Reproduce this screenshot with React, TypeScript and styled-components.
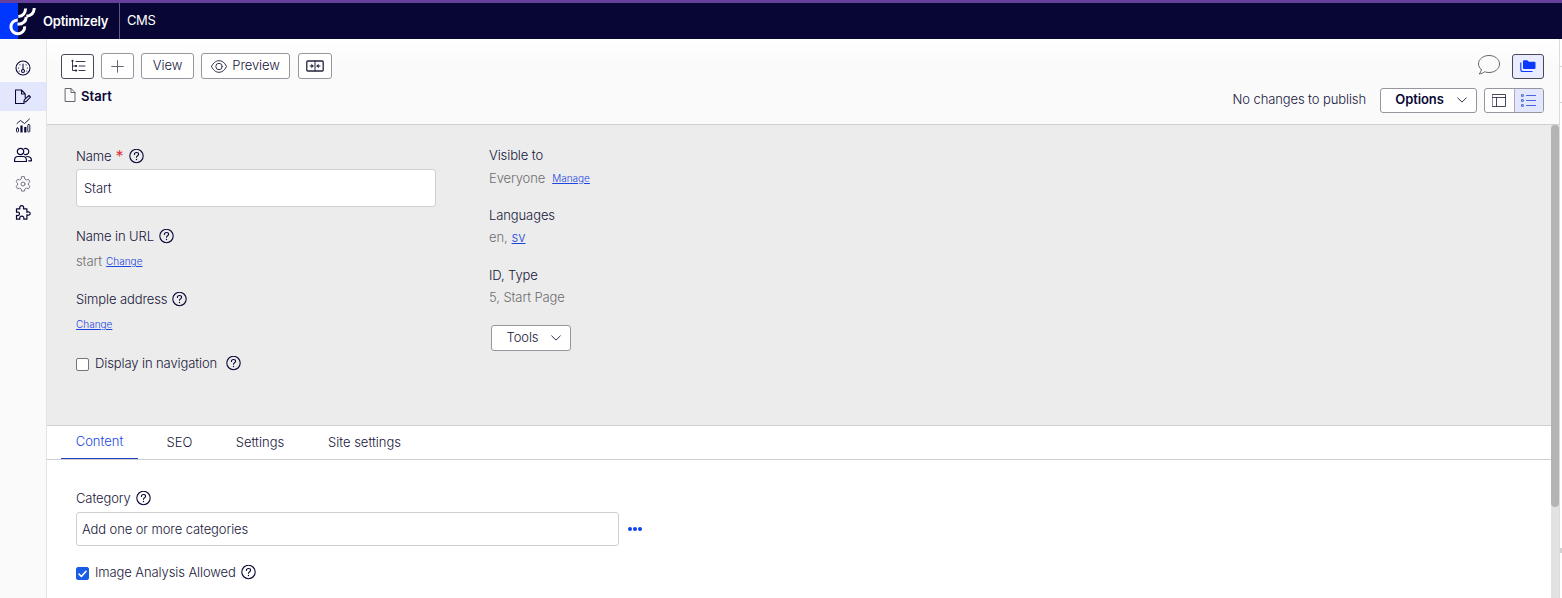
import React from "react";
import styled, { createGlobalStyle, css } from "styled-components";

const ink = "#080736";
const blue = "#1b46e0";

const GlobalStyle = createGlobalStyle`
  * { box-sizing: border-box; }
  body { margin: 0; background: #fff; }
  body, button, input { font-family: Inter, "Liberation Sans", sans-serif; font-size: 13px; font-weight: 300; letter-spacing: -0.1px; color: #17163a; }
  svg { display: block; flex: none; }
`;

const Page = styled.div`
  display: flex;
  flex-direction: column;
  width: 1562px;
  height: 598px;
  overflow: hidden;
`;

const TopBar = styled.header`
  display: flex;
  height: 39px;
  flex: none;
  border-top: 3px solid #65419d;
  background: #070634;
  color: #fff;
`;

const LogoBox = styled.div`
  width: 43px;
  background: linear-gradient(90deg, #0037ff 18px, #070634 18px);
`;

const Brand = styled.div`
  width: 77px;
  border-right: 1px solid #5d5c7c;
  line-height: 36px;
  font-weight: 600;
  letter-spacing: -0.2px;
`;

const Product = styled.div`
  padding-left: 7px;
  line-height: 35px;
  font-weight: 400;
  letter-spacing: -0.4px;
`;

const Body = styled.div`
  display: flex;
  flex: 1;
  min-height: 0;
`;

const SideNav = styled.nav`
  width: 47px;
  flex: none;
  padding-top: 14px;
  border-right: 1px solid #e3e3ea;
  background: #fafafa;
`;

const NavItem = styled.a<{ $active?: boolean }>`
  display: flex;
  align-items: center;
  justify-content: center;
  height: 29px;
  color: ${ink};
  background: ${(p) => (p.$active ? "#e3e7fe" : "transparent")};
`;

const Main = styled.main`
  display: flex;
  flex-direction: column;
  width: 1512px;
  flex: none;
`;

const Toolbar = styled.div`
  display: flex;
  justify-content: space-between;
  height: 86px;
  flex: none;
  padding: 14px 15px 0 14px;
  border-bottom: 1px solid #cfcfd3;
  background: linear-gradient(#fff, #fafafa 30px);
`;

const ToolbarSide = styled.div<{ $end?: boolean }>`
  display: flex;
  flex-direction: column;
  align-items: ${(p) => (p.$end ? "flex-end" : "flex-start")};
  gap: 8px;
`;

const ButtonRow = styled.div<{ $gap: number }>`
  display: flex;
  align-items: center;
  gap: ${(p) => p.$gap}px;
  height: 26px;
`;

const Button = styled.button<{ $w: number; $strong?: boolean; $tint?: boolean; $bold?: boolean }>`
  display: flex;
  align-items: center;
  justify-content: center;
  gap: 5px;
  width: ${(p) => p.$w}px;
  height: ${(p) => (p.$strong || p.$bold ? 25 : 26)}px;
  padding: 0;
  border: 1px solid ${(p) => (p.$strong ? "#484858" : "#96969e")};
  border-radius: 3px;
  background: ${(p) => (p.$tint ? "#e9ecff" : "#fff")};
  line-height: 18px;
  ${(p) => p.$bold && css`font-weight: 600; color: ${ink};`}
`;

const Caption = styled.span<{ $before?: number; $after?: number }>`
  height: 20px;
  margin: 0 ${(p) => p.$after ?? 0}px 0 ${(p) => p.$before ?? 0}px;
`;

const PageTitle = styled.h1`
  display: flex;
  align-items: center;
  gap: 5px;
  height: 18px;
  margin: 0 0 0 3px;
  font-size: 13px;
  font-weight: 600;
  letter-spacing: 0.05px;
  color: ${ink};
`;

const Status = styled.span`
  height: 19px;
  margin-right: 7px;
`;

const Segmented = styled.div`
  display: flex;
  width: 60px;
  height: 25px;
  border: 1px solid #96969e;
  border-radius: 3px;
  overflow: hidden;
  background: #fff;
`;

const Segment = styled.div<{ $active?: boolean }>`
  display: flex;
  flex: 1;
  align-items: center;
  justify-content: center;
  ${(p) => p.$active && css`border-left: 1px solid #a9acc0; background: #e3e7fe;`}
`;

const ScrollArea = styled.div`
  display: flex;
  flex: 1;
  min-height: 0;
`;

const Content = styled.div`
  width: 1504px;
  flex: none;
`;

const ScrollTrack = styled.div`
  width: 8px;
  background: #e2e2e2;
`;

const ScrollThumb = styled.div`
  height: 382px;
  border-radius: 4px;
  background: #b4b4b4;
`;

const Header = styled.section`
  display: flex;
  height: 301px;
  padding: 21px 0 0 29px;
  border-bottom: 1px solid #cfcfcf;
  background: #ececec;
`;

const Column = styled.div<{ $w: number; $lift?: number }>`
  width: ${(p) => p.$w}px;
  margin-top: ${(p) => -(p.$lift ?? 0)}px;
`;

const Line = styled.div<{ $after?: number; $gap?: number; $muted?: boolean }>`
  display: flex;
  align-items: center;
  height: 20px;
  gap: ${(p) => p.$gap ?? 5}px;
  margin-bottom: ${(p) => p.$after ?? 0}px;
  white-space: nowrap;
  color: ${(p) => (p.$muted ? "#6d6d70" : "inherit")};
`;

const Link = styled.a<{ $large?: boolean }>`
  font-size: ${(p) => (p.$large ? 13 : 10)}px;
  letter-spacing: 0;
  color: ${blue};
  text-decoration: underline;
`;

const Required = styled.span`
  height: 21px;
  margin: 0 1px 0 -1px;
  font-size: 16px;
  font-weight: 400;
  color: #dc3545;
`;

const Field = styled.input<{ $w: number; $h: number; $pad: number; $after: number }>`
  display: block;
  width: ${(p) => p.$w}px;
  height: ${(p) => p.$h}px;
  margin: 0 0 ${(p) => p.$after}px;
  padding: 0 ${(p) => p.$pad}px 1px;
  border: 1px solid #cfcfd2;
  border-radius: 3px;
  background: #fff;
`;

const Check = styled.span<{ $on?: boolean }>`
  display: flex;
  align-items: center;
  justify-content: center;
  width: 13px;
  height: 13px;
  margin: 3px 1px 0 0;
  border: 1px solid ${(p) => (p.$on ? "#1a5ce5" : "#74747a")};
  border-radius: 2px;
  background: ${(p) => (p.$on ? "#1a5ce5" : "#fff")};
`;

const HelpOffset = styled.span`
  margin-left: 4px;
`;

const ToolsSlot = styled.div`
  padding: 18px 0 0 2px;
`;

const Tabs = styled.div`
  display: flex;
  height: 34px;
  padding-left: 14px;
  border-bottom: 1px solid #cfcfcf;
`;

const Tab = styled.a<{ $w: number; $active?: boolean }>`
  width: ${(p) => p.$w}px;
  height: ${(p) => (p.$active ? 33 : 34)}px;
  text-align: center;
  letter-spacing: 0;
  line-height: ${(p) => (p.$active ? 31 : 33)}px;
  ${(p) => p.$active && css`color: ${blue}; border-bottom: 1px solid #1c3fc4;`}
`;

const Form = styled.section`
  padding: 28px 0 0 29px;
`;

const FieldRow = styled.div`
  display: flex;
  gap: 9px;
`;

const Dots = styled.div`
  display: flex;
  gap: 1px;
  padding-top: 15px;
`;

const Dot = styled.i`
  width: 4px;
  height: 4px;
  border-radius: 50%;
  background: #0d43ee;
`;

const Edge = styled.aside`
  flex: 1;
  padding-top: 27px;
  border-left: 1px solid #dcdcde;
`;

const EdgeMark = styled.div<{ $h: number; $after: number }>`
  height: ${(p) => p.$h}px;
  margin-bottom: ${(p) => p.$after}px;
  background: #d2d2d4;
`;

type SvgProps = { w: number; h: number; children: React.ReactNode; stroke?: number; color?: string };
const Icon = ({ w, h, children, stroke = 1.1, color = "currentColor" }: SvgProps) => (
  <svg width={w} height={h} viewBox={`0 0 ${w} ${h}`} fill="none" stroke={color} strokeWidth={stroke} strokeLinecap="round" strokeLinejoin="round">
    {children}
  </svg>
);

const Help = () => (
  <Icon w={15} h={15} color={ink} stroke={1.1}>
    <circle cx="7.5" cy="7" r="6.7" />
    <path d="M5.4 5.500c0-1.2.9-2 2.1-2s2.1.8 2.1 1.800c0 1.400-2.1 1.500-2.1 3" />
    <path d="M7.5 10.300v.2" strokeWidth="1.3" />
  </Icon>
);

const Chevron = () => (
  <Icon w={10} h={7} stroke={1} color="#33334a"><path d="M.7.9 5 5.1 9.3.9" /></Icon>
);

const Logo = () => (
  <Icon w={43} h={36} stroke={3} color="#fff">
    <g strokeLinecap="butt">
      <path d="M17.800 16.900a6.900 6.900 0 1 0 6.900 6.500" />
      <path d="M17.500 21.300C23 21 26 18.300 26.300 13.800" />
      <path d="M18.300 13.500C23 13.300 25.400 10.300 25.600 5.500" />
      <path d="M26.300 13.200C31.300 12.800 34 9.800 34.300 5" />
    </g>
  </Icon>
);

const App = () => (
  <>
    <GlobalStyle />
    <Page>
      <TopBar>
        <LogoBox><Logo /></LogoBox>
        <Brand>Optimizely</Brand>
        <Product>CMS</Product>
      </TopBar>
      <Body>
        <SideNav>
          <NavItem>
            <Icon w={16} h={16}>
              <circle cx="8" cy="8" r="7" />
              <circle cx="8" cy="11" r="1.500" />
              <path d="M8 4v5.500M3.500 8h.2M12.300 8h.2M4.900 4.800l.1.100M11 4.800l.100.100M4.300 11h.1M11.700 11h.1" />
            </Icon>
          </NavItem>
          <NavItem $active>
            <Icon w={16} h={16}>
              <path d="M9.200 14.500H.5V1h6l3.700 3.800v3.700M6.500 1v4h3.700" />
              <path d="m8.700 13.300.7-2.600 4.600-4.200 1.500 1.600-4.500 4.500-2.300.7Z" />
            </Icon>
          </NavItem>
          <NavItem>
            <Icon w={16} h={16} stroke={0.9}>
              <path d="m2 5.500 3.500-3 4 3L14.500 1" />
              <rect x="1.500" y="10" width="2" height="4" rx=".8" />
              <path d="M6.500 7.500V14.500M10.300 9v5.500" strokeWidth="2.200" strokeLinecap="butt" />
              <rect x="12.800" y="6.500" width="2" height="7.500" rx=".8" />
            </Icon>
          </NavItem>
          <NavItem>
            <Icon w={18} h={16} stroke={1.200}>
              <circle cx="6.500" cy="4.500" r="3.200" />
              <path d="M.6 14.500v-1.500c0-2.200 1.500-3.500 3.400-3.500h5c1.900 0 3.400 1.300 3.400 3.500v1.500ZM10.300 1.700c2-.8 4.500.6 4.500 2.800s-2 3.500-4.200 2.900M12.700 9.500c2.500 0 4.700 1.200 4.700 3.500v.8h-2.700" />
            </Icon>
          </NavItem>
          <NavItem>
            <Icon w={16} h={16} stroke={1} color="#77778b">
              <path d="m6.600 1-.4 2-1.700 1-2-.7-1.400 2.500 1.500 1.300v2L1.100 10.300l1.400 2.500 2-.7 1.700 1 .4 2h2.800l.4-2 1.700-1 2 .7 1.400-2.500-1.500-1.200v-2l1.500-1.300-1.400-2.500-2 .7-1.700-1-.4-2Z" />
              <circle cx="8" cy="8" r="2" />
            </Icon>
          </NavItem>
          <NavItem>
            <Icon w={16} h={16} stroke={1.200}>
              <path d="M1.500 3.800h3.400C4.200 2 5.200.7 6.700.7S9.200 2 8.500 3.800h3.400v3.500c1.600-.9 3.300-.3 3.300 1.200s-1.700 2.200-3.300 1.300v4.400H8.700c.7-1.900-.4-3-1.900-3s-2.600 1.100-1.900 3H1.500v-3.900c1.900.7 3-.1 3-1.500s-1.100-2.200-3-1.500Z" />
            </Icon>
          </NavItem>
        </SideNav>
        <Main>
          <Toolbar>
            <ToolbarSide>
              <ButtonRow $gap={7}>
                <Button $w={33} $strong aria-label="Navigation tree">
                  <Icon w={16} h={14} stroke={0.9} color="#24243e">
                    <path d="M2.500 2.500v9h2.500M2.500 7h2.500M6 2.500h9M9 7h6M9 11.500h6" />
                    <path d="M2.500 1.800v.2M5.800 7h.4M5.800 11.500h.4" strokeWidth="2" />
                  </Icon>
                </Button>
                <Button $w={33} aria-label="Add">
                  <Icon w={13} h={13} stroke={1} color="#666674"><path d="M6.500.7v11.600M.7 6.500h11.600" /></Icon>
                </Button>
                <Button $w={53}><Caption>View</Caption></Button>
                <Button $w={89}>
                  <Icon w={16} h={13} stroke={1} color="#33334a">
                    <path d="M.5 6.500C2.200 2.600 5 .700 8 .700s5.800 1.900 7.500 5.800C13.800 10.400 11 12.300 8 12.300S2.200 10.400.5 6.500Z" />
                    <circle cx="8" cy="6.500" r="3.200" />
                  </Icon>
                  <Caption>Preview</Caption>
                </Button>
                <CompareSlot>
                  <Button $w={34} aria-label="Compare">
                    <Icon w={18} h={12} stroke={1.300} color="#24243e">
                      <rect x=".8" y="1" width="16.400" height="10" rx="1" />
                      <path d="M9 1v10" strokeWidth="1" />
                      <path d="M4 6h3M11 6h3" strokeWidth="1" />
                      <path d="M5.800 4.600 7.300 6 5.800 7.400ZM12.200 4.600 10.700 6l1.500 1.400Z" strokeWidth=".6" fill="#24243e" />
                    </Icon>
                  </Button>
                </CompareSlot>
              </ButtonRow>
              <PageTitle>
                <Icon w={12} h={16} stroke={1} color="#666670"><path d="M1.500.500h5.500l4 4v9H1.500ZM7 .500v4h4" /></Icon>
                Start
              </PageTitle>
            </ToolbarSide>
            <ToolbarSide $end>
              <ButtonRow $gap={11}>
                <Icon w={24} h={24} stroke={1} color="#666672">
                  <path d="M4.300 15.500C2.500 14 1.500 12 1.500 10c0-4.900 4.700-8.500 10.500-8.500S22.500 5.100 22.500 10s-4.700 8.500-10.500 8.500c-1.600 0-3-.2-4.300-.7-1.700 1.200-3.700 2-5.700 2.200 1.400-1.200 2.200-2.700 2.300-4.500Z" />
                </Icon>
                <Button $w={32} $strong $tint aria-label="Assets">
                  <svg width="16" height="14" viewBox="0 0 16 14">
                    <path d="M3 2.200q0-1 1-1h3.200l1.700 1.500H14.500q1 0 1 1V9q0 1-1 1H4q-1 0-1-1Z" fill="#0d38ff" />
                    <path d="M.8 3.500V10.500q0 2 2 2H12.500" fill="none" stroke="#0d38ff" strokeWidth="1.100" />
                  </svg>
                </Button>
              </ButtonRow>
              <ButtonRow $gap={7}>
                <Status>No changes to publish</Status>
                <Button $w={97} $bold>
                  <Caption $before={5} $after={8}>Options</Caption><Chevron />
                </Button>
                <Segmented>
                  <Segment>
                    <Icon w={14} h={13} stroke={0.9} color="#33334a"><path d="M.5.500h13v12H.5ZM.5 3.500h13M4.500 3.500v9" /></Icon>
                  </Segment>
                  <Segment $active>
                    <Icon w={15} h={13} stroke={0.9} color="#3455d8">
                      <path d="M5.500 1.500h9M5.500 6.500h9M5.500 11.500h9" />
                      <path d="M.7.700h1.600v1.600H.7ZM.7 5.700h1.600v1.600H.7ZM.7 10.700h1.600v1.600H.7Z" />
                    </Icon>
                  </Segment>
                </Segmented>
              </ButtonRow>
            </ToolbarSide>
          </Toolbar>
          <ScrollArea>
            <Content>
              <Header>
                <Column $w={413}>
                  <Line $after={3}>Name <Required>*</Required><Help /></Line>
                  <Field $w={360} $h={38} $pad={7} $after={19} defaultValue="Start" />
                  <Line $after={5}>Name in URL <Help /></Line>
                  <Line $after={18} $gap={4} $muted>start <Link>Change</Link></Line>
                  <Line $after={5}>Simple address <Help /></Line>
                  <Line $after={19}><Link>Change</Link></Line>
                  <Line><Check />Display in navigation <HelpOffset><Help /></HelpOffset></Line>
                </Column>
                <Column $w={300} $lift={1}>
                  <Line $after={3}>Visible to</Line>
                  <Line $after={17} $gap={7} $muted>Everyone <Link>Manage</Link></Line>
                  <Line $after={2}>Languages</Line>
                  <Line $after={18} $gap={4} $muted>en, <Link $large>sv</Link></Line>
                  <Line $after={2}>ID, Type</Line>
                  <Line $muted>5, Start Page</Line>
                  <ToolsSlot>
                    <Button $w={80}><Caption $before={6} $after={8}>Tools</Caption><Chevron /></Button>
                  </ToolsSlot>
                </Column>
              </Header>
              <Tabs>
                <Tab $w={77} $active>Content</Tab>
                <Tab $w={83}>SEO</Tab>
                <Tab $w={78}>Settings</Tab>
                <Tab $w={131}>Site settings</Tab>
              </Tabs>
              <Form>
                <Line $after={4}>Category <Help /></Line>
                <FieldRow>
                  <Field $w={543} $h={34} $pad={5} $after={16} defaultValue="Add one or more categories" />
                  <Dots><Dot /><Dot /><Dot /></Dots>
                </FieldRow>
                <Line>
                  <Check $on><Icon w={9} h={8} stroke={1.600} color="#fff"><path d="m1 4 2.400 2.500L8 1.300" /></Icon></Check>
                  Image Analysis Allowed <Help />
                </Line>
              </Form>
            </Content>
            <ScrollTrack><ScrollThumb /></ScrollTrack>
          </ScrollArea>
        </Main>
        <Edge>
          <EdgeMark $h={1} $after={35} />
          <EdgeMark $h={1} $after={445} />
          <EdgeMark $h={5} $after={0} />
        </Edge>
      </Body>
    </Page>
  </>
);

const CompareSlot = styled.div`
  margin-left: 1px;
`;

export default App;
